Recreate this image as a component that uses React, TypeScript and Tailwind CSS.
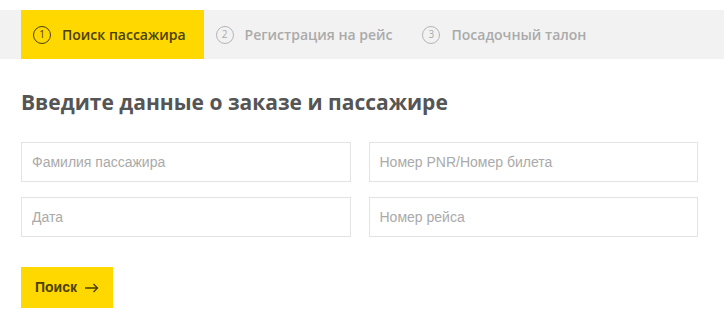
import React from "react";

const steps = [
  { n: 1, label: "Поиск пассажира", active: true },
  { n: 2, label: "Регистрация на рейс", active: false },
  { n: 3, label: "Посадочный талон", active: false },
];

const fields = [
  "Фамилия пассажира",
  "Номер PNR/Номер билета",
  "Дата",
  "Номер рейса",
];

export default function App() {
  return (
    <div className="h-[324px] w-[724px] bg-white pt-[10px]">
      {/* шаги */}
      <div className="flex h-[49px] bg-[#f2f2f2] pl-[21px] font-['Open_Sans',sans-serif] text-[14px] font-semibold">
        {steps.map(({ n, label, active }) => (
          <div
            key={n}
            className={
              active
                ? "flex items-center bg-[#ffd800] pl-3 pr-[18px] text-[#4a4000]"
                : "flex items-center pl-3 pr-[18px] text-[#aaaaaa]"
            }
          >
            <span
              className={
                active
                  ? "mr-[11px] flex h-[18px] w-[18px] items-center justify-center rounded-full border border-[#4a4000] text-[10px] font-normal"
                  : "mr-[11px] flex h-[18px] w-[18px] items-center justify-center rounded-full border border-[#b5b5b5] text-[10px] font-normal"
              }
            >
              {n}
            </span>
            {label}
          </div>
        ))}
      </div>

      <div className="px-[21px]">
        <h2 className="mt-[30px] font-['Open_Sans',sans-serif] text-[21px] leading-[26px] font-bold text-[#555555]">
          Введите данные о заказе и пассажире
        </h2>

        <div className="mt-[27px] grid w-[677px] grid-cols-2 gap-x-[18px] gap-y-[15px]">
          {fields.map((f) => (
            <input
              key={f}
              placeholder={f}
              className="h-[40px] border border-[#e3e3e3] px-[10px] font-['Liberation_Sans',Arial,sans-serif] text-[14px] text-[#333] outline-none placeholder:text-[#aaaaaa]"
            />
          ))}
        </div>

        <button className="mt-[30px] flex h-[41px] w-[92px] items-center justify-center gap-[8px] bg-[#ffd800] font-['Liberation_Sans',Arial,sans-serif] text-[14px] font-bold text-[#4a4000]">
          Поиск
          <svg width="14" height="10" viewBox="0 0 14 10" fill="none" stroke="#4a4000" strokeWidth="1.4">
            <path d="M0 5h12.5M8.5 1l4 4-4 4" />
          </svg>
        </button>
      </div>
    </div>
  );
}
